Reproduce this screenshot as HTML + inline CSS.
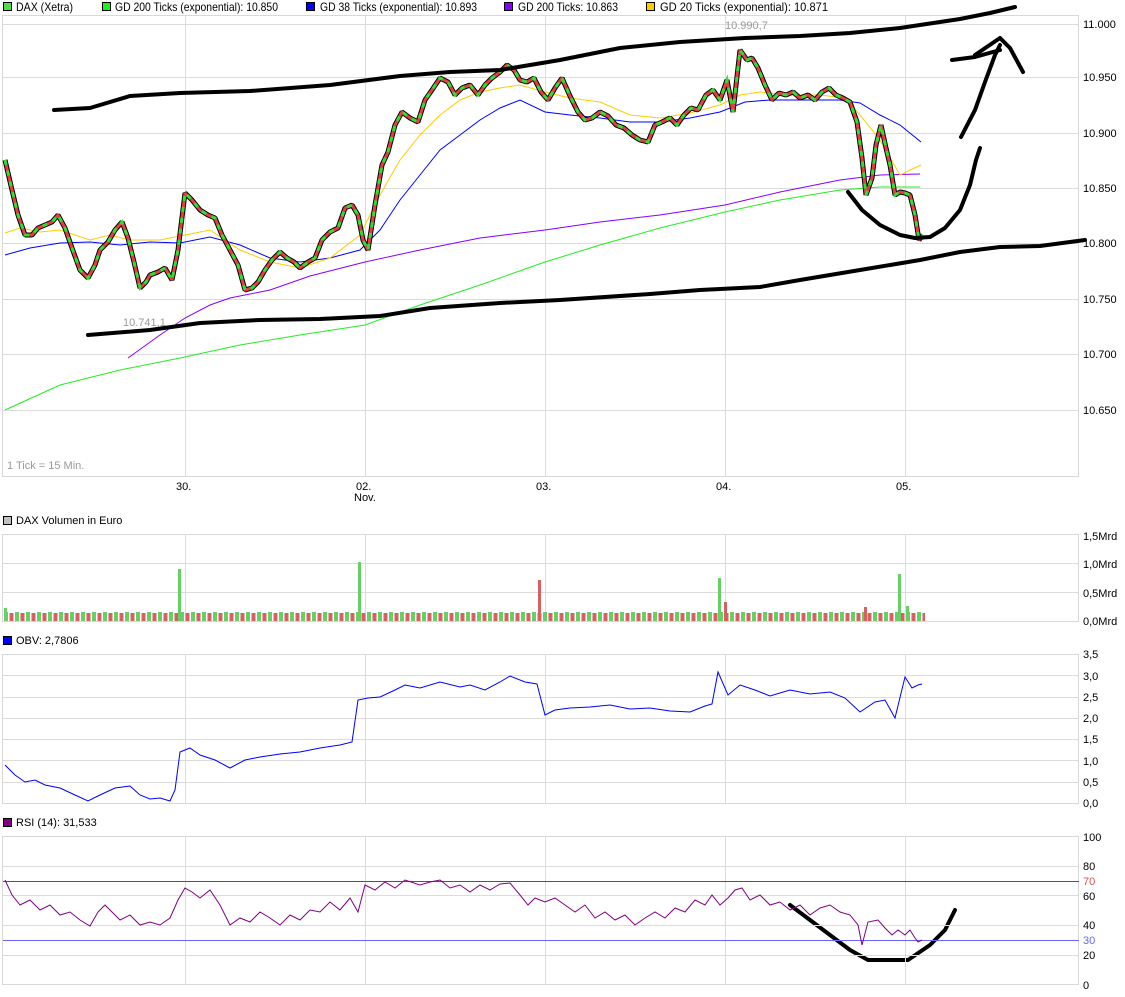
<!DOCTYPE html>
<html><head><meta charset="utf-8"><style>
html,body{margin:0;padding:0;background:#fff;}
svg{display:block;font-family:"Liberation Sans",sans-serif;font-size:11px;}
</style></head><body>
<svg width="1125" height="997" viewBox="0 0 1125 997" xmlns="http://www.w3.org/2000/svg">
<defs>
<pattern id="vb" x="4" y="0" width="11" height="997" patternUnits="userSpaceOnUse">
<rect x="0" y="612" width="4" height="9" fill="#66d066"/>
<rect x="5.5" y="613" width="4" height="8" fill="#d96060"/>
</pattern>
</defs>
<!-- legend -->
<g font-size="12">
<rect x="3.5" y="2.5" width="8" height="8" fill="#4ddd4d" stroke="#000" stroke-width="1"/><text x="16" y="11" textLength="57" lengthAdjust="spacingAndGlyphs">DAX (Xetra)</text>
<rect x="102.5" y="2.5" width="8" height="8" fill="#22ee22" stroke="#000"/><text x="115" y="11" textLength="163" lengthAdjust="spacingAndGlyphs">GD 200 Ticks (exponential): 10.850</text>
<rect x="306.5" y="2.5" width="8" height="8" fill="#0000ff" stroke="#000"/><text x="320" y="11" textLength="157" lengthAdjust="spacingAndGlyphs">GD 38 Ticks (exponential): 10.893</text>
<rect x="504.5" y="2.5" width="8" height="8" fill="#8800ff" stroke="#000"/><text x="518" y="11" textLength="100" lengthAdjust="spacingAndGlyphs">GD 200 Ticks: 10.863</text>
<rect x="646.5" y="2.5" width="8" height="8" fill="#ffcc00" stroke="#000"/><text x="660" y="11" textLength="168" lengthAdjust="spacingAndGlyphs">GD 20 Ticks (exponential): 10.871</text>
</g>
<!-- main panel -->
<rect x="2.5" y="15.5" width="1076" height="461" fill="none" stroke="#d8d8d8"/>
<g stroke="#dcdcdc" stroke-width="1">
<line x1="3" y1="24.5" x2="1079" y2="24.5"/><line x1="3" y1="77.5" x2="1079" y2="77.5"/><line x1="3" y1="133.5" x2="1079" y2="133.5"/><line x1="3" y1="188.5" x2="1079" y2="188.5"/><line x1="3" y1="243.5" x2="1079" y2="243.5"/><line x1="3" y1="299.5" x2="1079" y2="299.5"/><line x1="3" y1="354.5" x2="1079" y2="354.5"/><line x1="3" y1="410.5" x2="1079" y2="410.5"/>
<line x1="185.5" y1="16" x2="185.5" y2="476"/><line x1="365.5" y1="16" x2="365.5" y2="476"/><line x1="545.5" y1="16" x2="545.5" y2="476"/><line x1="725.5" y1="16" x2="725.5" y2="476"/><line x1="905.5" y1="16" x2="905.5" y2="476"/>
</g>
<g font-size="11">
<text x="1083" y="28">11.000</text><text x="1083" y="81">10.950</text><text x="1083" y="137">10.900</text><text x="1083" y="192">10.850</text><text x="1083" y="247">10.800</text><text x="1083" y="303">10.750</text><text x="1083" y="358">10.700</text><text x="1083" y="414">10.650</text>
<text x="176" y="490">30.</text><text x="356" y="490">02.</text><text x="354" y="501">Nov.</text><text x="536" y="490">03.</text><text x="716" y="490">04.</text><text x="896" y="490">05.</text>
<text x="7" y="469" fill="#999">1 Tick = 15 Min.</text>
<text x="123" y="326" fill="#999">10.741,1</text>
<text x="725" y="29" fill="#999">10.990,7</text>
</g>
<!-- MAs -->
<polyline fill="none" stroke="#22ee22" stroke-width="1" points="5,410 60,385 120,370 180,358 240,345 300,335 365,325 420,305 480,285 545,262 600,245 660,228 725,212 780,200 840,190 880,187 920,187"/>
<polyline fill="none" stroke="#8800ff" stroke-width="1" points="128,358 160,335 185,318 210,305 230,298 270,290 310,276 365,262 420,250 480,238 545,230 600,222 660,215 725,205 780,192 840,180 880,175 920,174"/>
<polyline fill="none" stroke="#0000ff" stroke-width="1" points="5,255 30,248 60,243 90,242 120,245 150,242 180,243 210,237 240,245 270,258 300,262 330,258 360,250 380,230 400,200 420,175 440,150 460,135 480,120 500,108 520,100 545,112 570,115 600,118 630,122 660,122 690,118 720,112 745,102 770,100 800,100 840,100 860,103 880,115 900,125 921,142"/>
<polyline fill="none" stroke="#ffcc00" stroke-width="1" points="5,233 20,228 40,232 60,230 90,240 110,235 130,240 160,240 185,235 210,230 240,250 270,262 300,268 330,258 360,235 380,195 400,160 420,135 440,115 460,100 480,92 500,88 520,85 545,92 570,98 600,102 630,115 660,118 690,113 720,105 740,95 760,92 790,95 820,95 845,98 860,115 880,140 900,175 921,165"/>
<!-- price -->
<polyline fill="none" stroke="#000" stroke-width="5" stroke-linejoin="bevel" points="5,160 12,190 18,215 25,235 32,235 38,228 45,225 52,222 58,215 65,228 72,248 80,270 88,278 95,265 100,250 108,242 115,230 122,222 128,238 134,262 140,288 146,282 150,275 158,272 165,268 172,280 178,250 185,193 192,200 200,210 208,215 215,218 222,235 230,250 238,265 245,290 252,288 258,282 265,270 272,260 280,252 287,258 294,262 300,268 308,262 315,258 322,240 330,232 338,228 345,208 352,205 358,215 363,240 368,250 375,205 382,165 388,152 395,125 402,112 410,118 418,122 425,100 432,90 440,78 448,82 455,95 462,88 470,85 478,95 485,85 492,78 500,72 507,65 514,70 520,80 527,82 534,78 541,92 548,100 555,88 562,78 570,96 578,112 585,120 592,118 600,112 608,116 616,125 624,128 632,135 640,140 648,142 655,125 662,122 670,118 677,125 684,115 691,108 698,110 706,95 713,90 720,100 727,80 733,112 740,50 747,60 752,58 758,68 765,85 772,100 779,93 786,95 793,92 800,98 808,95 815,100 822,92 829,88 836,95 843,98 850,102 857,122 862,158 866,195 872,178 876,145 881,125 886,148 890,165 895,195 900,192 905,193 910,195 915,215 919,240 923,235"/>
<polyline fill="none" stroke="#e04040" stroke-width="3" stroke-linejoin="bevel" points="5,160 12,190 18,215 25,235 32,235 38,228 45,225 52,222 58,215 65,228 72,248 80,270 88,278 95,265 100,250 108,242 115,230 122,222 128,238 134,262 140,288 146,282 150,275 158,272 165,268 172,280 178,250 185,193 192,200 200,210 208,215 215,218 222,235 230,250 238,265 245,290 252,288 258,282 265,270 272,260 280,252 287,258 294,262 300,268 308,262 315,258 322,240 330,232 338,228 345,208 352,205 358,215 363,240 368,250 375,205 382,165 388,152 395,125 402,112 410,118 418,122 425,100 432,90 440,78 448,82 455,95 462,88 470,85 478,95 485,85 492,78 500,72 507,65 514,70 520,80 527,82 534,78 541,92 548,100 555,88 562,78 570,96 578,112 585,120 592,118 600,112 608,116 616,125 624,128 632,135 640,140 648,142 655,125 662,122 670,118 677,125 684,115 691,108 698,110 706,95 713,90 720,100 727,80 733,112 740,50 747,60 752,58 758,68 765,85 772,100 779,93 786,95 793,92 800,98 808,95 815,100 822,92 829,88 836,95 843,98 850,102 857,122 862,158 866,195 872,178 876,145 881,125 886,148 890,165 895,195 900,192 905,193 910,195 915,215 919,240 923,235"/>
<polyline fill="none" stroke="#33dd33" stroke-width="3" stroke-dasharray="5 6" points="5,160 12,190 18,215 25,235 32,235 38,228 45,225 52,222 58,215 65,228 72,248 80,270 88,278 95,265 100,250 108,242 115,230 122,222 128,238 134,262 140,288 146,282 150,275 158,272 165,268 172,280 178,250 185,193 192,200 200,210 208,215 215,218 222,235 230,250 238,265 245,290 252,288 258,282 265,270 272,260 280,252 287,258 294,262 300,268 308,262 315,258 322,240 330,232 338,228 345,208 352,205 358,215 363,240 368,250 375,205 382,165 388,152 395,125 402,112 410,118 418,122 425,100 432,90 440,78 448,82 455,95 462,88 470,85 478,95 485,85 492,78 500,72 507,65 514,70 520,80 527,82 534,78 541,92 548,100 555,88 562,78 570,96 578,112 585,120 592,118 600,112 608,116 616,125 624,128 632,135 640,140 648,142 655,125 662,122 670,118 677,125 684,115 691,108 698,110 706,95 713,90 720,100 727,80 733,112 740,50 747,60 752,58 758,68 765,85 772,100 779,93 786,95 793,92 800,98 808,95 815,100 822,92 829,88 836,95 843,98 850,102 857,122 862,158 866,195 872,178 876,145 881,125 886,148 890,165 895,195 900,192 905,193 910,195 915,215 919,240 923,235"/>
<!-- hand drawn -->
<g fill="none" stroke="#000" stroke-width="4" stroke-linecap="round" stroke-linejoin="round">
<polyline points="54,110 90,108 130,96 180,93 250,91 330,85 400,76 450,72 500,70 560,60 620,48 680,42 745,38 800,36 850,33 900,28 960,19 990,13 1015,7"/>
<polyline points="88,335 150,330 200,323 260,320 320,319 380,316 430,308 500,303 560,300 650,294 700,290 760,287 800,280 860,270 920,260 960,252 1000,247 1040,246 1085,240"/>
<polyline points="848,192 862,210 880,225 900,235 915,238 930,237 945,228 960,210 970,185 976,160 980,148"/>
<polyline points="961,137 975,110 985,82 995,55 1000,45"/>
<polyline points="952,60 975,57 1000,50"/>
<polyline points="975,55 1000,38 1010,48 1023,72"/>
<polyline points="790,905 810,920 830,935 850,950 868,960 908,960 930,945 945,930 955,910"/>
</g>
<!-- volume -->
<g font-size="11"><rect x="3.5" y="516.5" width="8" height="8" fill="#c0c0c0" stroke="#000"/><text x="16" y="524">DAX Volumen in Euro</text></g>
<rect x="2.5" y="534.5" width="1076" height="87" fill="none" stroke="#d8d8d8"/>
<g stroke="#dcdcdc"><line x1="3" y1="563.5" x2="1079" y2="563.5"/><line x1="3" y1="592.5" x2="1079" y2="592.5"/>
<line x1="185.5" y1="535" x2="185.5" y2="621"/><line x1="365.5" y1="535" x2="365.5" y2="621"/><line x1="545.5" y1="535" x2="545.5" y2="621"/><line x1="725.5" y1="535" x2="725.5" y2="621"/><line x1="905.5" y1="535" x2="905.5" y2="621"/></g>
<rect x="4" y="600" width="921" height="21" fill="url(#vb)"/>
<g><rect x="178" y="569" width="3" height="52" fill="#66d066"/><rect x="358" y="562" width="3" height="59" fill="#66d066"/><rect x="538" y="580" width="3" height="41" fill="#d96060"/><rect x="718" y="578" width="3" height="43" fill="#66d066"/><rect x="898" y="574" width="3" height="47" fill="#66d066"/><rect x="724" y="602" width="3" height="19" fill="#d96060"/><rect x="864" y="607" width="3" height="14" fill="#d96060"/><rect x="4" y="608" width="3" height="13" fill="#66d066"/><rect x="906" y="606" width="3" height="15" fill="#66d066"/></g>
<g font-size="11"><text x="1083" y="540">1,5Mrd</text><text x="1083" y="568">1,0Mrd</text><text x="1083" y="597">0,5Mrd</text><text x="1083" y="625">0,0Mrd</text></g>
<!-- OBV -->
<g font-size="11"><rect x="3.5" y="636.5" width="8" height="8" fill="#0000ff" stroke="#000"/><text x="16" y="644">OBV: 2,7806</text></g>
<rect x="2.5" y="654.5" width="1076" height="149" fill="none" stroke="#d8d8d8"/>
<g stroke="#dcdcdc"><line x1="3" y1="675.5" x2="1079" y2="675.5"/><line x1="3" y1="697.5" x2="1079" y2="697.5"/><line x1="3" y1="718.5" x2="1079" y2="718.5"/><line x1="3" y1="739.5" x2="1079" y2="739.5"/><line x1="3" y1="760.5" x2="1079" y2="760.5"/><line x1="3" y1="782.5" x2="1079" y2="782.5"/>
<line x1="185.5" y1="655" x2="185.5" y2="803"/><line x1="365.5" y1="655" x2="365.5" y2="803"/><line x1="545.5" y1="655" x2="545.5" y2="803"/><line x1="725.5" y1="655" x2="725.5" y2="803"/><line x1="905.5" y1="655" x2="905.5" y2="803"/></g>
<polyline fill="none" stroke="#0000ff" stroke-width="1" points="5,765 15,775 25,782 35,780 45,785 60,788 75,795 88,801 100,795 115,788 130,786 140,795 150,799 160,798 170,801 175,790 180,752 190,748 200,755 215,760 230,768 245,760 260,757 280,754 300,752 320,748 340,745 352,742 358,700 368,698 380,697 395,690 405,685 420,688 440,682 460,687 470,685 485,690 500,682 510,676 525,682 537,684 545,715 555,710 570,708 590,707 610,705 630,709 650,708 670,711 690,712 705,706 712,704 718,672 728,695 740,685 755,690 770,696 790,690 810,694 830,692 845,698 860,712 875,702 885,700 895,718 905,677 912,688 918,685 922,684"/>
<g font-size="11"><text x="1083" y="658">3,5</text><text x="1083" y="680">3,0</text><text x="1083" y="701">2,5</text><text x="1083" y="722">2,0</text><text x="1083" y="743">1,5</text><text x="1083" y="765">1,0</text><text x="1083" y="786">0,5</text><text x="1083" y="807">0,0</text></g>
<!-- RSI -->
<g font-size="11"><rect x="3.5" y="818.5" width="8" height="8" fill="#800080" stroke="#000"/><text x="16" y="826">RSI (14): 31,533</text></g>
<rect x="2.5" y="836.5" width="1076" height="148" fill="none" stroke="#d8d8d8"/>
<g stroke="#dcdcdc"><line x1="3" y1="866.5" x2="1079" y2="866.5"/><line x1="3" y1="895.5" x2="1079" y2="895.5"/><line x1="3" y1="925.5" x2="1079" y2="925.5"/><line x1="3" y1="955.5" x2="1079" y2="955.5"/>
<line x1="185.5" y1="837" x2="185.5" y2="984"/><line x1="365.5" y1="837" x2="365.5" y2="984"/><line x1="545.5" y1="837" x2="545.5" y2="984"/><line x1="725.5" y1="837" x2="725.5" y2="984"/><line x1="905.5" y1="837" x2="905.5" y2="984"/></g>
<line x1="3" y1="881.5" x2="1079" y2="881.5" stroke="#555" stroke-width="1"/>
<line x1="3" y1="940.5" x2="1079" y2="940.5" stroke="#6666ff" stroke-width="1"/>
<polyline fill="none" stroke="#800080" stroke-width="1" points="5,880 12,895 20,905 30,900 40,910 50,905 60,915 70,912 80,920 90,926 98,912 105,905 112,912 120,920 130,915 140,925 150,922 160,925 170,918 178,900 185,888 192,892 200,898 210,890 220,905 230,925 240,918 250,922 260,912 270,918 280,925 290,915 300,920 310,910 320,912 330,902 340,910 350,898 358,912 365,885 375,890 385,882 395,888 405,880 420,885 430,882 440,880 450,888 460,885 470,892 480,885 490,890 500,884 510,883 520,895 528,905 535,898 545,902 555,898 565,905 575,912 585,905 595,918 605,912 615,920 625,915 635,925 645,918 655,912 665,918 675,908 685,912 695,900 705,905 712,895 720,905 728,898 735,890 742,888 750,900 760,895 770,905 780,902 790,910 800,905 810,915 820,908 830,905 840,912 850,915 858,925 862,945 868,922 878,920 885,928 892,935 898,930 905,935 910,930 915,938 918,942 922,940"/>
<g font-size="11"><text x="1083" y="841">100</text><text x="1083" y="870">80</text><text x="1083" y="885" fill="#e05050">70</text><text x="1083" y="900">60</text><text x="1083" y="929">40</text><text x="1083" y="944" fill="#6666ff">30</text><text x="1083" y="959">20</text><text x="1083" y="989">0</text></g>
</svg>
</body></html>
